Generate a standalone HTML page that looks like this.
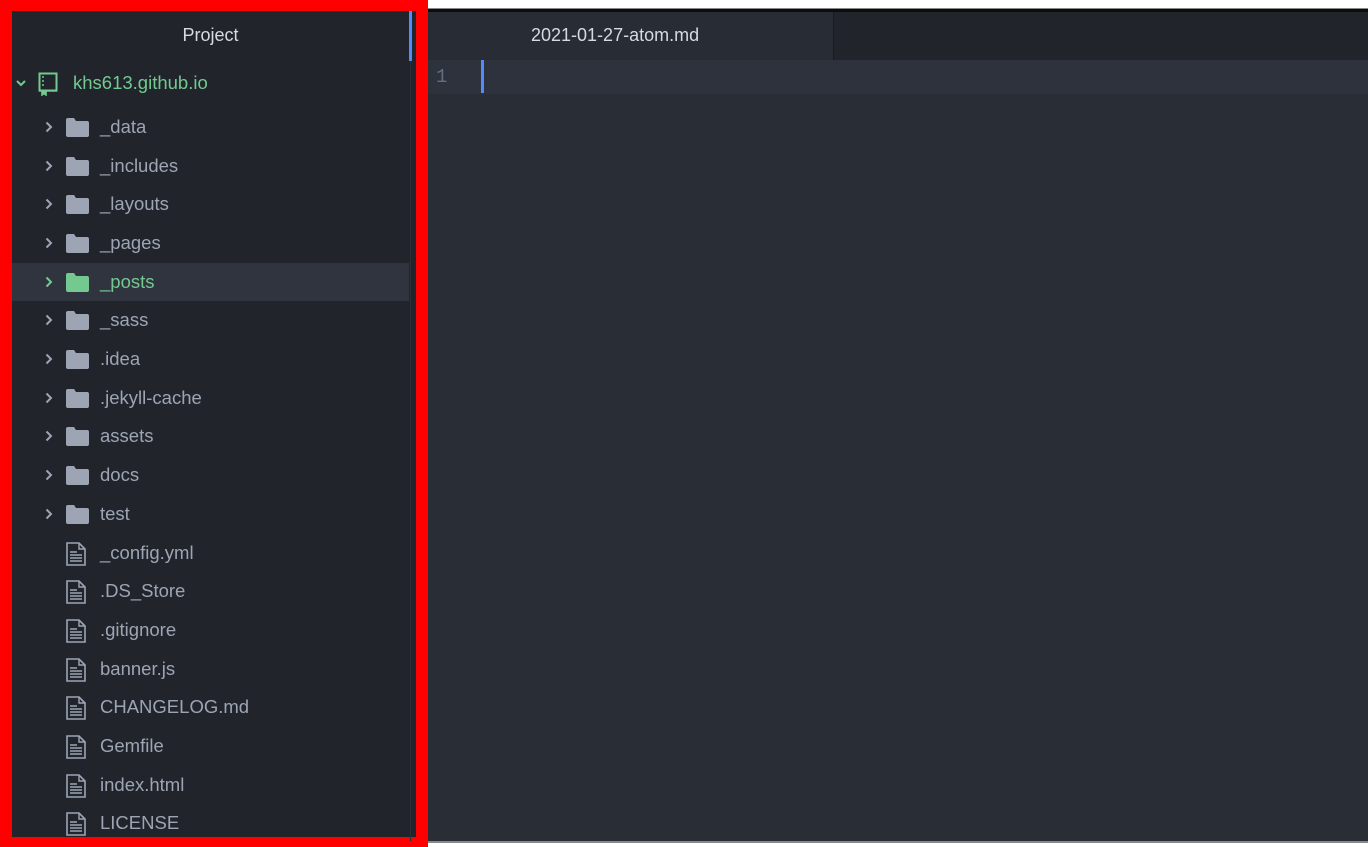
<!DOCTYPE html>
<html><head><meta charset="utf-8"><style>
*{margin:0;padding:0;box-sizing:border-box}
body{width:1368px;height:847px;background:#fff;position:relative;overflow:hidden;font-family:"Liberation Sans",sans-serif}
.abs{position:absolute}
#panel{left:0;top:0;width:428px;height:847px;background:#21252b;border:12px solid #ff0000;border-top-width:11px;border-bottom-width:10px}
.row{position:absolute;left:0;width:397px;height:38px;font-size:18.5px;color:#9da5b4;line-height:38px}
.row .t{position:absolute;left:88px;top:0}
.row svg{position:absolute}
</style></head><body>
<div class="abs" style="left:428px;top:8px;width:940px;height:2px;background:#888"></div>
<div class="abs" style="left:428px;top:9px;width:940px;height:3px;background:#0c0c0c"></div>
<div class="abs" style="left:428px;top:12px;width:940px;height:48px;background:#21242b"></div>
<div class="abs" style="left:428px;top:12px;width:405px;height:48px;background:#282c34;color:#d7dae0;font-size:18px;line-height:46px;padding-left:103px">2021-01-27-atom.md</div>
<div class="abs" style="left:833px;top:12px;width:1px;height:48px;background:#181a1f"></div>
<div class="abs" style="left:428px;top:60px;width:940px;height:782px;background:#292d35"></div>
<div class="abs" style="left:428px;top:60px;width:940px;height:34px;background:#2e323d"></div>
<div class="abs" style="left:436px;top:62px;font-family:'Liberation Mono',monospace;font-size:19px;color:#636d83;line-height:30px">1</div>
<div class="abs" style="left:481px;top:60px;width:3px;height:33px;background:#528bff"></div>
<div class="abs" style="left:428px;top:841px;width:940px;height:2px;background:#888"></div>

<div id="panel" class="abs">
  <div class="abs" style="left:0;top:0;width:397px;height:48px;color:#d7dae0;font-size:18px;text-align:center;line-height:48px">Project</div>
  <div class="abs" style="left:397px;top:0;width:3px;height:50px;background:#528bff"></div>
  <div class="abs" style="left:398px;top:50px;width:1px;height:780px;background:#2c3038"></div>
  <div class="row" style="top:53px;color:#73c990">
    <svg style="left:4px;top:15px" width="10" height="8" viewBox="0 0 10 8"><path d="M1 2l4 4 4-4" stroke="#73c990" stroke-width="2" fill="none"/></svg>
    <svg style="left:26px;top:8px" width="20" height="24" viewBox="0 0 20 24"><rect x="1.5" y="1.5" width="17" height="17" fill="none" stroke="#73c990" stroke-width="2"/><path d="M5 4v2M5 8v2M5 12v2" stroke="#73c990" stroke-width="1.5"/><path d="M1 19h18M4 19v4l2-1.5 2 1.5v-4" stroke="#73c990" stroke-width="1.6" fill="#73c990"/></svg>
    <span class="t" style="left:61px">khs613.github.io</span>
  </div>
  <div id="rows"></div>
</div>
<script>
var items=[["_data",1],["_includes",1],["_layouts",1],["_pages",1],["_posts",2],["_sass",1],[".idea",1],[".jekyll-cache",1],["assets",1],["docs",1],["test",1],["_config.yml",0],[".DS_Store",0],[".gitignore",0],["banner.js",0],["CHANGELOG.md",0],["Gemfile",0],["index.html",0],["LICENSE",0]];
var h="";
items.forEach(function(it,i){
 var c=97+i*38.68;
 var sel=it[1]==2, col=sel?"#73c990":"#9da5b4", ic=sel?"#73c990":"#9da5b4";
 h+='<div class="row" style="top:'+c.toFixed(1)+'px;'+(sel?'background:#2f343f;color:#73c990':'')+'">';
 if(it[1]){
  h+='<svg style="left:33px;top:13px" width="8" height="12" viewBox="0 0 8 12"><path d="M1.5 1.5l4.5 4.5-4.5 4.5" stroke="'+col+'" stroke-width="2" fill="none"/></svg>';
  h+='<svg style="left:54px;top:10px" width="23" height="19" viewBox="0 0 23 19"><path d="M0 2q0-2 2-2h6l2 3h11q2 0 2 2v12q0 2-2 2H2q-2 0-2-2z" fill="'+ic+'"/></svg>';
 }else{
  h+='<svg style="left:54px;top:8px" width="20" height="24" viewBox="0 0 20 24"><path d="M1 1h12l6 6v16H1z" fill="none" stroke="#9da5b4" stroke-width="1.6"/><path d="M13 1v6h6" fill="none" stroke="#9da5b4" stroke-width="1.4"/><path d="M4 10h7M4 13h12M4 16h12M4 19h12" stroke="#9da5b4" stroke-width="1.4"/></svg>';
 }
 h+='<span class="t">'+it[0]+'</span></div>';
});
document.getElementById("rows").innerHTML=h;
</script>
</body></html>
